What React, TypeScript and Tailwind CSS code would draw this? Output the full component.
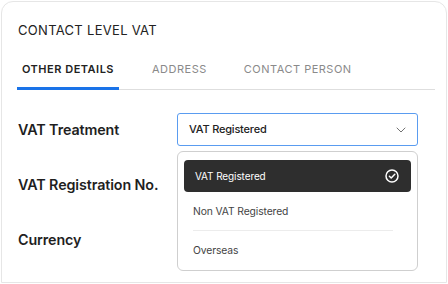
import { ChevronDown } from "lucide-react";

const TABS = ["OTHER DETAILS", "ADDRESS", "CONTACT PERSON"];

function CheckCircle() {
  return (
    <svg width="14" height="14" viewBox="0 0 14 14" fill="none" stroke="white" strokeWidth="1.5" strokeLinecap="round" strokeLinejoin="round">
      <circle cx="7" cy="7" r="6" />
      <path d="M4.4 7.2l1.8 1.8 3.6-3.8" />
    </svg>
  );
}

export default function App() {
  return (
    <div className="h-[284px] w-[448px] bg-white pt-[1px] pl-[1px]" style={{ fontFamily: "Inter, 'Noto Sans', sans-serif" }}>
      <div className="h-[282px] w-[446px] rounded-t-[12px] border border-[#e6e6e6] pl-[15px] pr-[11px] pt-[20px]">
        <h1 className="pl-[1px] text-[13px] leading-[16px] tracking-[0.3px] text-[#222]">CONTACT LEVEL VAT</h1>

        <div className="mt-[24px] flex border-b border-[#dedede]">
          {TABS.map((t, i) => (
            <div
              key={t}
              className={
                i === 0
                  ? "-mb-px mr-[28px] border-b-[3px] border-[#1a73e8] px-[5px] pb-[10px] text-[11px] font-semibold leading-[14px] tracking-[0.5px] text-[#222]"
                  : "mr-[27px] px-[5px] pb-[13px] text-[11px] leading-[14px] tracking-[0.5px] text-[#8a8a8a]"
              }
            >
              {t}
            </div>
          ))}
        </div>

        <div className="mt-[23px] flex flex-col gap-[22px] pl-[1px]">
          <div className="flex h-[33px] items-center">
            <div className="w-[159px] text-[14.3px] font-semibold tracking-[-0.1px] text-[#1f1f1f]">VAT Treatment</div>
            <div className="relative">
              <div className="flex h-[33px] w-[241px] items-center justify-between rounded-[3px] border border-[#5a9cf0] pl-[11px] pr-[8px]">
                <span className="text-[11px] font-medium tracking-[-0.2px] text-[#222]">VAT Registered</span>
                <ChevronDown size={16} strokeWidth={1.4} className="text-[#666]" />
              </div>
              <div className="absolute left-0 top-[38px] z-10 h-[120px] w-[241px] rounded-[6px] border border-[#cfcfcf] bg-white px-[6px] pt-[8px]">
                <div className="flex h-[32px] items-center justify-between rounded-[4px] bg-[#2e2e2e] pl-[11px] pr-[12px]">
                  <span className="text-[10px] tracking-[-0.1px] text-white">VAT Registered</span>
                  <CheckCircle />
                </div>
                <div className="ml-[9px] mr-[18px] flex h-[39px] items-center border-b border-[#ececec] pt-[2px] text-[10.3px] tracking-[-0.1px] text-[#444]">
                  Non VAT Registered
                </div>
                <div className="flex h-[38px] items-center pl-[9px] pt-[2px] text-[10.3px] tracking-[-0.1px] text-[#444]">Overseas</div>
              </div>
            </div>
          </div>
          <div className="flex h-[33px] items-center">
            <div className="w-[159px] text-[14.3px] font-semibold tracking-[-0.1px] text-[#1f1f1f]">VAT Registration No.</div>
          </div>
          <div className="flex h-[33px] items-center">
            <div className="w-[159px] text-[14.3px] font-semibold tracking-[-0.1px] text-[#1f1f1f]">Currency</div>
          </div>
        </div>
      </div>
    </div>
  );
}
